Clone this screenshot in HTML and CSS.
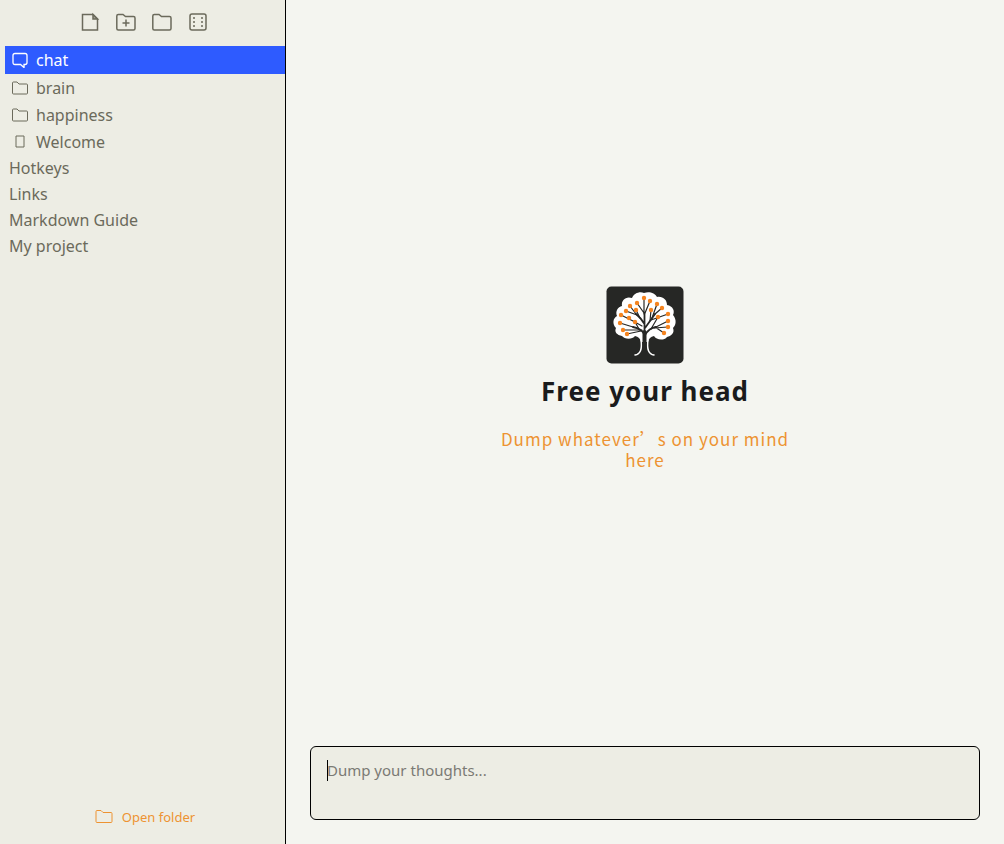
FILE: index.html
```html
<!DOCTYPE html>
<html lang="en">
<head>
  <meta charset="UTF-8">
  <meta name="viewport" content="width=device-width, initial-scale=1.0">
  <title>Free your head</title>
  <link rel="stylesheet" href="styles.css">
</head>
<body>
  <aside class="sidebar">
    <div class="toolbar">
      <button aria-label="New note">
        <svg width="20" height="20" viewBox="0 0 20 20"><path d="M2.500 2.500H13l4.500 4.500v11h-15z"/><path class="fold" d="M13 2.500V7h4.500z"/></svg>
      </button>
      <button aria-label="New folder">
        <svg width="20" height="20" viewBox="0 0 20 20"><path d="M.8 4q0-1.500 1.500-1.500H7L9.500 4.500H17.500q1.500 0 1.500 1.500v10.500q0 1.500-1.500 1.500H2.300Q.8 18 .8 16.500zM10 7.500v7M6.500 11h7"/></svg>
      </button>
      <button aria-label="Open folder">
        <svg width="20" height="20" viewBox="0 0 20 20"><path d="M.8 4q0-1.500 1.500-1.500H7L9.500 4.500H17.500q1.500 0 1.500 1.500v10.500q0 1.500-1.500 1.500H2.300Q.8 18 .8 16.500z"/></svg>
      </button>
      <button aria-label="View">
        <svg width="20" height="20" viewBox="0 0 20 20"><rect x="2" y="2" width="16" height="16" rx="2"/><path class="dots" d="M6 5v11M14 5v11"/></svg>
      </button>
    </div>

    <nav class="files">
      <a class="item active" href="#chat">
        <svg width="16" height="16" viewBox="0 0 16 16"><path d="M3 1.500h10q2 0 2 2v7q0 2-2 2h-1v3l-3.500-3H3q-2 0-2-2v-7q0-2 2-2z"/></svg>
        chat
      </a>
      <a class="item" href="#brain">
        <svg width="16" height="16" viewBox="0 0 16 16"><path d="M.5 3q0-1 1-1H5l2 2h7.500q1 0 1 1v8q0 1-1 1h-13q-1 0-1-1z"/></svg>
        brain
      </a>
      <a class="item" href="#happiness">
        <svg width="16" height="16" viewBox="0 0 16 16"><path d="M.5 3q0-1 1-1H5l2 2h7.500q1 0 1 1v8q0 1-1 1h-13q-1 0-1-1z"/></svg>
        happiness
      </a>
      <a class="item" href="#welcome">
        <svg width="16" height="16" viewBox="0 0 16 16"><path d="M4 2h8v11H4z"/></svg>
        Welcome
      </a>
      <a class="note" href="#hotkeys">Hotkeys</a>
      <a class="note" href="#links">Links</a>
      <a class="note" href="#guide">Markdown Guide</a>
      <a class="note" href="#project">My project</a>
    </nav>

    <button class="open-folder">
      <svg width="18" height="16" viewBox="0 0 18 16"><path d="M1 2.500q0-1 1-1h4l2 2h8q1 0 1 1v8q0 1-1 1H2q-1 0-1-1z"/></svg>
      Open folder
    </button>
  </aside>

  <main class="main">
    <section class="welcome">
      <svg class="logo" width="78" height="78" viewBox="0 0 78 78">
        <rect x=".5" y=".5" width="77" height="77" rx="5" fill="#262725"/>
        <path fill="#fff" d="M35 56Q34 51 29 50C26 54 18 53 16 50C11 49 8 46 10 42C6 38 7 32 11 30C9 25 12 21 16 20C15 14 20 10 26 12C28 7 34 5 38 7C43 5 49 7 51 11C57 10 61 14 61 19C67 20 69 25 67 29C71 34 70 39 67 42C69 47 65 50 61 51C58 55 50 54 48 50Q43 51 42 56z"/>
        <g fill="none" stroke="#fff" stroke-width="1.500" stroke-linecap="round">
          <path d="M35 54Q37 68 29 69M42 54Q40 68 48 69"/>
        </g>
        <g fill="none" stroke="#262725" stroke-linecap="round">
          <path stroke-width="4" d="M38.500 62V46"/>
          <path stroke-width="1.800" d="M38.500 48V27M38 48Q36 43 27 41M38.500 38Q35 32 30 28M39 42L49 28M39 49Q43 42 50 41"/>
          <path stroke-width="1.200" d="M38 28V12M38 27L31 17M39 27L44 15M30 28L24 20M31 29L20 25M34 32L30 24M27 35L15 29M36 40L27 35M27 41L14 37M36 44L17 44M35 45L21 48M33 43L29 36M44 35L45 24M46 32L51 18M49 28L56 22M45 34L62 28M45 43L52 31M50 41L62 35M48 42L62 41M49 41L58 47"/>
        </g>
        <g fill="#f5841f">
          <circle cx="38" cy="12" r="2.200"/><circle cx="31" cy="17" r="2.200"/><circle cx="44" cy="15" r="2.200"/>
          <circle cx="24" cy="20" r="2.200"/><circle cx="51" cy="18" r="2.200"/><circle cx="20" cy="25" r="2.200"/>
          <circle cx="30" cy="24" r="2.200"/><circle cx="45" cy="24" r="2.200"/><circle cx="56" cy="22" r="2.200"/>
          <circle cx="15" cy="29" r="2.200"/><circle cx="23" cy="32" r="2.200"/><circle cx="62" cy="28" r="2.200"/>
          <circle cx="52" cy="31" r="2.200"/><circle cx="14" cy="37" r="2.200"/><circle cx="29" cy="36" r="2.200"/>
          <circle cx="62" cy="35" r="2.200"/><circle cx="17" cy="44" r="2.200"/><circle cx="62" cy="41" r="2.200"/>
          <circle cx="21" cy="48" r="2.200"/><circle cx="58" cy="47" r="2.200"/>
        </g>
      </svg>
      <h1>Free your head</h1>
      <p lang="zh-CN">Dump whatever’s on your mind here</p>
    </section>

    <div class="composer">
      <textarea aria-label="Dump your thoughts" placeholder="Dump your thoughts..."></textarea>
      <span class="caret"></span>
    </div>
  </main>
</body>
</html>
```

FILE: styles.css
```css
* {
  box-sizing: border-box;
}
body {
  margin: 0;
  min-height: 100vh;
  display: flex;
  font-family: "Noto Sans", sans-serif;
  font-size: 16px;
  background: #f4f5f0;
  color: #6b6a5b;
}
button {
  padding: 0;
  border: none;
  background: none;
  color: inherit;
  font: inherit;
  cursor: pointer;
}
svg {
  display: block;
  flex: none;
  fill: none;
  stroke: currentColor;
}
.sidebar {
  flex: none;
  width: 286px;
  display: flex;
  flex-direction: column;
  background: #edede4;
  border-right: 1px solid #000;
}
.toolbar {
  display: flex;
  justify-content: center;
  gap: 16px;
  padding: 12px 0 14px 2px;
}
.toolbar svg {
  stroke-width: 1.5;
}
.toolbar .fold {
  fill: #a5a498;
}
.toolbar .dots {
  stroke-dasharray: 2 2;
}
.files {
  flex: 1;
  display: flex;
  flex-direction: column;
  padding-left: 5px;
}
.files a {
  color: inherit;
  text-decoration: none;
}
.item {
  display: flex;
  align-items: center;
  gap: 8px;
  height: 27px;
  padding-left: 7px;
}
.item.active {
  height: 28px;
  background: #2e5bff;
}
.item.active svg {
  stroke-width: 1.3;
}
.files .active {
  color: #fff;
}
.note {
  padding-left: 4px;
  line-height: 26px;
}
.open-folder {
  display: flex;
  align-items: center;
  justify-content: center;
  gap: 9px;
  padding-left: 5px;
  margin-bottom: 16px;
  font-size: 13px;
  line-height: 22px;
  color: #ed9332;
}
.main {
  flex: 1;
  min-width: 0;
  display: flex;
  flex-direction: column;
}
.welcome {
  flex: 1;
  display: flex;
  flex-direction: column;
  align-items: center;
  justify-content: center;
  padding-top: 10px;
  text-align: center;
}
.logo {
  stroke: none;
}
.welcome h1 {
  margin: 8px 0 18px;
  font-size: 26px;
  line-height: 38px;
  letter-spacing: 1px;
  color: #1a1b1c;
}
.welcome p {
  max-width: 300px;
  margin: 0;
  font-family: "Noto Sans CJK SC", sans-serif;
  font-size: 17px;
  line-height: 21px;
  letter-spacing: 1px;
  color: #ed9332;
}
.composer {
  position: relative;
  padding: 0 24px 24px;
}
.composer textarea {
  display: block;
  width: 100%;
  height: 74px;
  padding: 12px 16px;
  border: 1px solid #000;
  border-radius: 6px;
  outline: none;
  resize: none;
  background: #edede4;
  color: #1a1b1c;
  font-family: inherit;
  font-size: 15px;
  line-height: 22px;
}
.composer textarea::placeholder {
  color: #7b7a74;
}
.caret {
  position: absolute;
  left: 41px;
  top: 14px;
  width: 1px;
  height: 21px;
  background: #000;
}
```
